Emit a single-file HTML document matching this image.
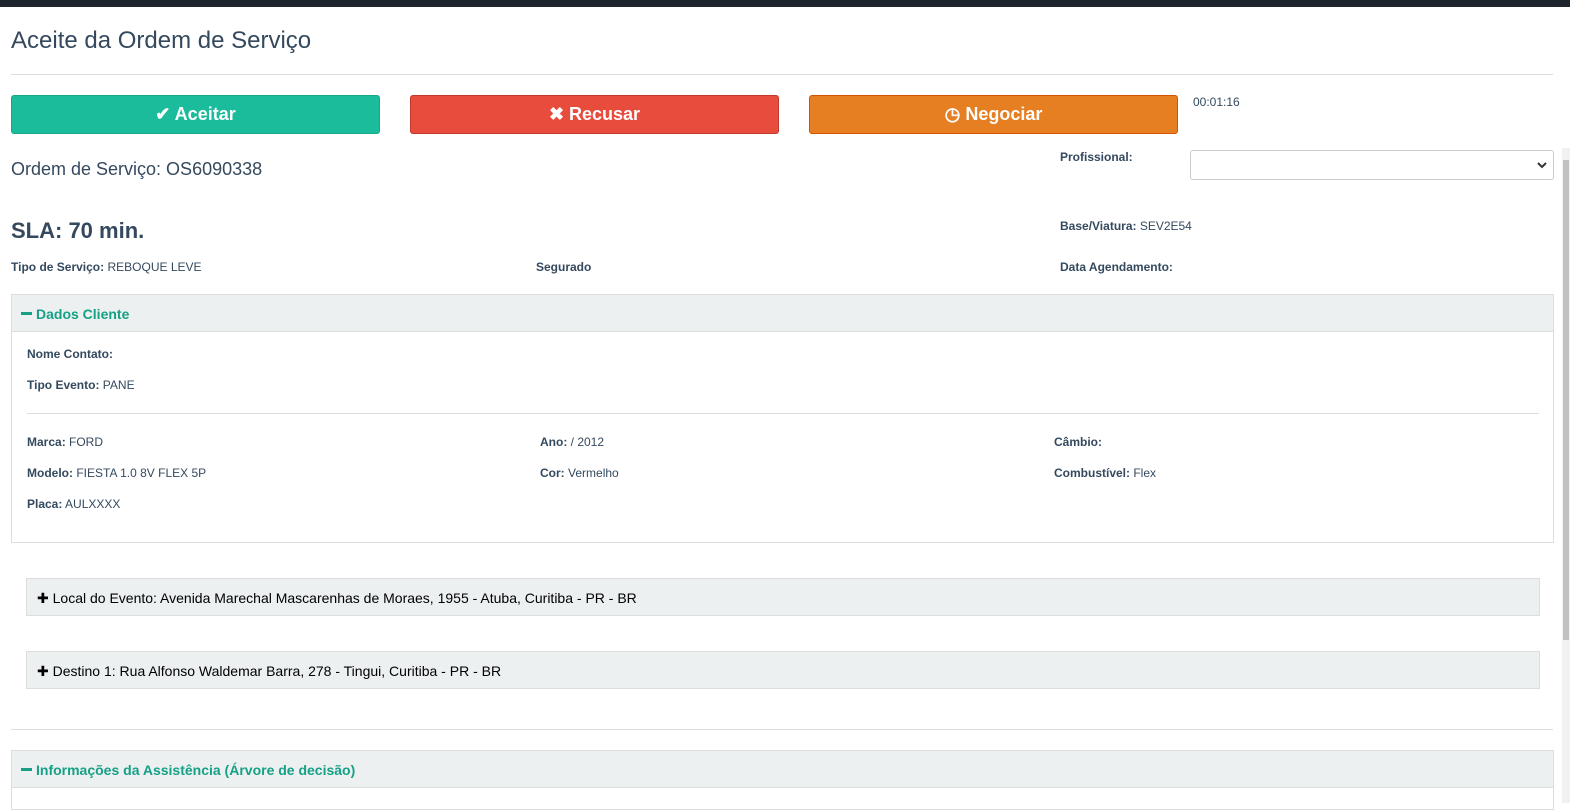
<!DOCTYPE html>
<html><head><meta charset="utf-8"><style>
*{box-sizing:border-box}
body{margin:0;width:1570px;height:803px;overflow:hidden;background:#fff;font-family:"Liberation Sans",Arial,sans-serif;color:#34495e;position:relative}
.nav{position:absolute;left:0;top:0;width:1570px;height:7px;background:#1f252d}
.abs{position:absolute}
h1{position:absolute;left:11px;top:27px;margin:0;font-size:24px;font-weight:400}
.hr{position:absolute;left:11px;width:1542px;height:1px;background:#ddd}
.btn{position:absolute;top:95px;width:369px;height:39px;border-radius:3px;color:#fff;font-weight:bold;font-size:18px;text-align:center;line-height:37px}
.sm{font-size:12px}
b{font-weight:bold}
.ph{position:absolute;background:#ecf0f1;border:1px solid #ddd}
.green{color:#16a085;font-weight:bold;font-size:14px}
.minus{display:inline-block;width:11px;height:3px;background:#16a085;vertical-align:middle;margin-right:4px;position:relative;top:-2px}
</style></head><body>
<div class="nav"></div>
<h1>Aceite da Ordem de Serviço</h1>
<div class="hr" style="top:74px"></div>
<div class="btn" style="left:11px;background:#1abc9c;border:1px solid #18a689">✔ Aceitar</div>
<div class="btn" style="left:410px;background:#e74c3c;border:1px solid #c0392b">✖ Recusar</div>
<div class="btn" style="left:809px;background:#e67e22;border:1px solid #d35400">◷ Negociar</div>
<div class="abs sm" style="left:1193px;top:95px">00:01:16</div>
<div class="abs" style="left:11px;top:159px;font-size:18px">Ordem de Serviço: OS6090338</div>
<div class="abs sm" style="left:1060px;top:150px"><b>Profissional:</b></div>
<div class="abs" style="left:1190px;top:150px;width:364px;height:30px;border:1px solid #ccc;border-radius:3px"><svg style="position:absolute;right:6px;top:10px" width="10" height="8" viewBox="0 0 10 8"><path d="M1 2 L5 6 L9 2" stroke="#333" stroke-width="2" fill="none"/></svg></div>
<div class="abs" style="left:11px;top:218px;font-size:22px;font-weight:bold">SLA: 70 min.</div>
<div class="abs sm" style="left:1060px;top:219px"><b>Base/Viatura:</b> SEV2E54</div>
<div class="abs sm" style="left:11px;top:260px"><b>Tipo de Serviço:</b> REBOQUE LEVE</div>
<div class="abs sm" style="left:536px;top:260px"><b>Segurado</b></div>
<div class="abs sm" style="left:1060px;top:260px"><b>Data Agendamento:</b></div>
<div class="abs" style="left:11px;top:294px;width:1543px;height:249px;border:1px solid #ddd"></div>
<div class="ph" style="left:11px;top:294px;width:1543px;height:38px"><span class="green abs" style="left:9px;top:11px"><span class="minus"></span>Dados Cliente</span></div>
<div class="abs sm" style="left:27px;top:347px"><b>Nome Contato:</b></div>
<div class="abs sm" style="left:27px;top:378px"><b>Tipo Evento:</b> PANE</div>
<div class="abs" style="left:27px;top:413px;width:1512px;height:1px;background:#ddd"></div>
<div class="abs sm" style="left:27px;top:435px"><b>Marca:</b> FORD</div>
<div class="abs sm" style="left:540px;top:435px"><b>Ano:</b> / 2012</div>
<div class="abs sm" style="left:1054px;top:435px"><b>Câmbio:</b></div>
<div class="abs sm" style="left:27px;top:466px"><b>Modelo:</b> FIESTA 1.0 8V FLEX 5P</div>
<div class="abs sm" style="left:540px;top:466px"><b>Cor:</b> Vermelho</div>
<div class="abs sm" style="left:1054px;top:466px"><b>Combustível:</b> Flex</div>
<div class="abs sm" style="left:27px;top:497px"><b>Placa:</b> AULXXXX</div>
<div class="ph" style="left:26px;top:578px;width:1514px;height:38px;color:#000;font-size:14px;padding:11px 10px">✚ Local do Evento: Avenida Marechal Mascarenhas de Moraes, 1955 - Atuba, Curitiba - PR - BR</div>
<div class="ph" style="left:26px;top:651px;width:1514px;height:38px;color:#000;font-size:14px;padding:11px 10px">✚ Destino 1: Rua Alfonso Waldemar Barra, 278 - Tingui, Curitiba - PR - BR</div>
<div class="hr" style="top:729px"></div>
<div class="abs" style="left:11px;top:750px;width:1543px;height:60px;border:1px solid #ddd"></div>
<div class="ph" style="left:11px;top:750px;width:1543px;height:38px"><span class="green abs" style="left:9px;top:11px"><span class="minus"></span>Informações da Assistência (Árvore de decisão)</span></div>
<div class="abs" style="left:1562px;top:148px;width:8px;height:655px;background:#f1f1f1"></div>
<div class="abs" style="left:1563px;top:160px;width:6px;height:480px;background:#c1c1c1"></div>
</body></html>
